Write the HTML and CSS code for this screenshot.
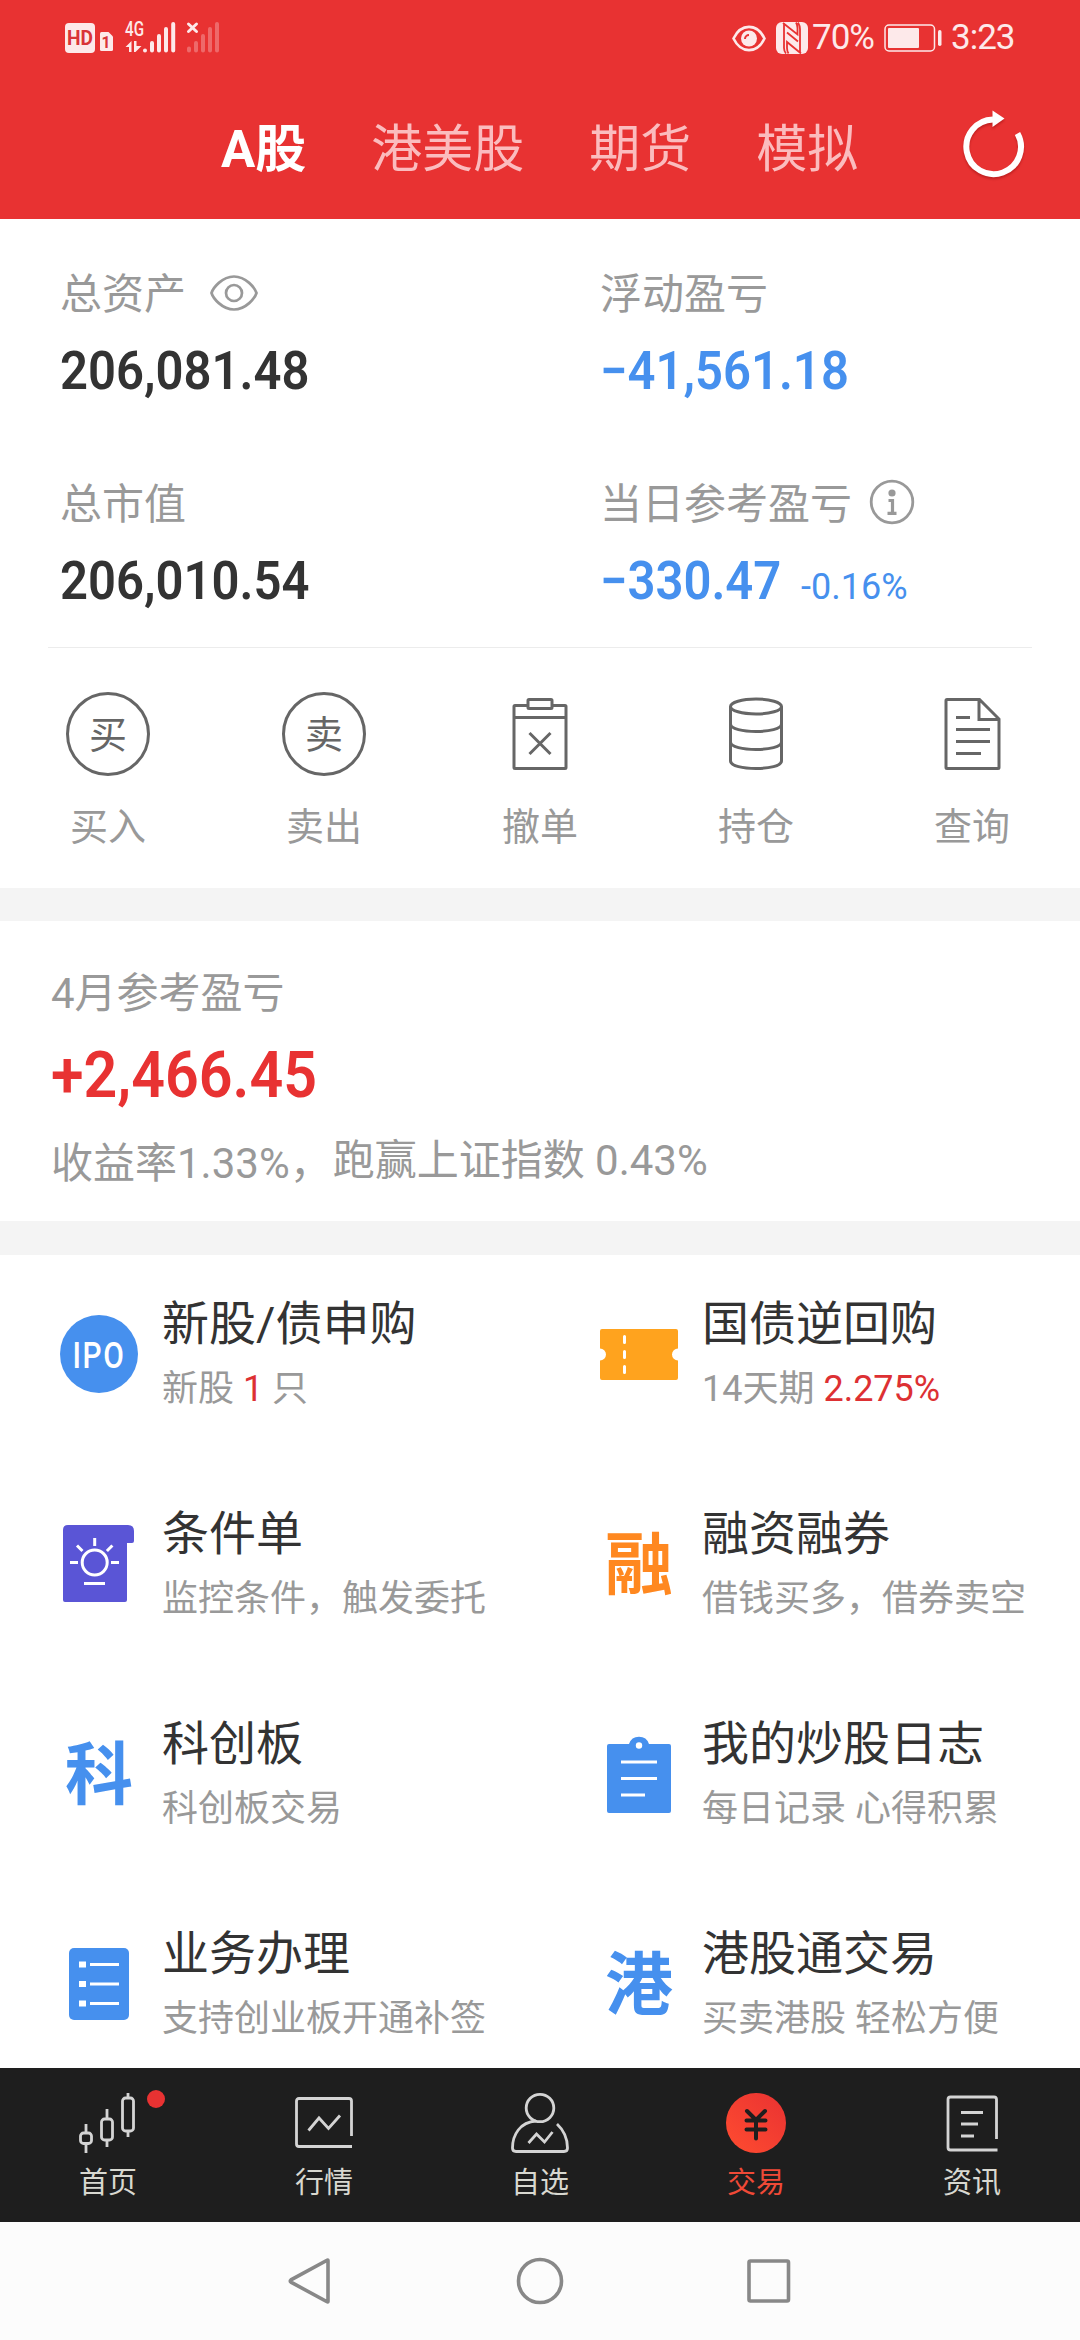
FILE: index.html
```html
<!DOCTYPE html>
<html lang="zh-CN">
<head>
<meta charset="utf-8">
<title>交易</title>
<link rel="stylesheet" href="styles.css">
</head>
<body>
<div class="screen">
  <header class="header">
    <div class="status">
      <svg class="status-left" width="156" height="46" viewBox="64 12 156 46" fill="#fde9ea">
        <rect x="65" y="23" width="30" height="30" rx="4"/>
        <text class="st-hd" x="67" y="45" textLength="26" lengthAdjust="spacingAndGlyphs">HD</text>
        <path d="M101.500 32h7l4.500 4.500v13a1.500 1.500 0 0 1-1.500 1.500h-10a1.500 1.500 0 0 1-1.500-1.500v-16a1.500 1.500 0 0 1 1.500-1.500z"/>
        <text class="st-sim" x="101.500" y="48" textLength="9" lengthAdjust="spacingAndGlyphs">1</text>
        <text class="st-net" x="125" y="36" textLength="19" lengthAdjust="spacingAndGlyphs">4G</text>
        <path d="M125.500 47l6-6v11h-2.500v-5zM134 41h2.500v5h5l-6 6h-1.500z"/>
        <g stroke="#fde9ea" stroke-width="4" stroke-linecap="round">
          <path d="M145 50.500v0M152 43v7.500M159 36v14.500M166 29v21.500M173.200 24v26.500"/>
          <path d="M188.500 24l8 7.500M196.500 24l-8 7.500" stroke-width="3"/>
          <path d="M189 48.500v2M196 43v7.500M203 36v14.500M210 29v21.500M217 24v26.500" opacity=".3"/>
        </g>
      </svg>
      <div class="status-right">
        <svg width="34" height="27" viewBox="0 0 34 27"><path d="M1.500 13.500C9-2 25-2 32.500 13.500 25 29 9 29 1.500 13.500z" fill="none" stroke="#fde9ea" stroke-width="2.600"/><circle cx="17" cy="13.500" r="8" fill="#fde9ea"/><path d="M13 14a4 4 0 0 1 4-4" fill="none" stroke="#e83232" stroke-width="2"/></svg>
        <svg class="nfc" width="32" height="32" viewBox="0 0 32 32"><rect width="32" height="32" rx="6" fill="#fde9ea"/><path d="M8 1v25q0 3 2 5.500M7 1l14.500 11.500V6q0-3-1.500-5.500M24 31V7q0-3-2-6.500M25 31.500L11 20v6q0 3 1.500 5.500M11 10.500l11 9" fill="none" stroke="#e83232" stroke-width="1.800"/></svg>
        <span class="st-text pct">70%</span>
        <svg class="battery" width="58" height="28" viewBox="0 0 58 28"><rect x="1" y="1" width="49.500" height="26" rx="4" fill="none" stroke="#fde9ea" stroke-width="1.500"/><rect x="4" y="4" width="31" height="20" rx="1" fill="#fde9ea"/><rect x="54" y="6" width="3.500" height="16" rx="1.700" fill="#fde9ea"/></svg>
        <span class="st-text clock">3:23</span>
      </div>
    </div>
    <nav class="markets">
      <span class="market active">A股</span>
      <span class="market">港美股</span>
      <span class="market">期货</span>
      <span class="market">模拟</span>
      <svg class="refresh" width="64" height="70" viewBox="0 0 64 70"><path d="M31 10.500A27.300 27.300 0 1 0 55.500 24.500" fill="none" stroke="#fff" stroke-width="6"/><path d="M30.500 1.500l12 8-12 8.500z" fill="#fff"/></svg>
    </nav>
  </header>

  <section class="account">
    <div class="figures">
      <div class="figure">
        <div class="label">总资产<svg class="eye" width="48" height="36" viewBox="0 0 48 36" fill="none" stroke="#999" stroke-width="2.700"><path d="M1.500 18C3 13 12 1.500 24 1.500S45 13 46.500 18C45 23 36 34.500 24 34.500S3 23 1.500 18z"/><circle cx="24" cy="18" r="8"/></svg></div>
        <div class="value"><span class="digits">206,081.48</span></div>
      </div>
      <div class="figure">
        <div class="label">浮动盈亏</div>
        <div class="value down"><span class="digits">−41,561.18</span></div>
      </div>
      <div class="figure">
        <div class="label">总市值</div>
        <div class="value"><span class="digits">206,010.54</span></div>
      </div>
      <div class="figure">
        <div class="label">当日参考盈亏<svg class="info" width="46" height="46" viewBox="0 0 46 46"><circle cx="23" cy="23" r="20.800" fill="none" stroke="#999" stroke-width="2.800"/><circle cx="23" cy="14" r="3.600" fill="#999"/><path d="M19.500 21.500h4v12.500M18.500 34.300h9" fill="none" stroke="#999" stroke-width="3.200"/></svg></div>
        <div class="value down"><span class="digits">−330.47</span><span class="rate">-0.16%</span></div>
      </div>
    </div>
    <div class="divider"></div>
    <div class="actions">
      <div class="action"><span class="ring">买</span><span class="action-name">买入</span></div>
      <div class="action"><span class="ring">卖</span><span class="action-name">卖出</span></div>
      <div class="action"><svg width="84" height="84" viewBox="0 0 84 84" class="line"><path d="M30 13.500h-13q-1 0-1 1v61q0 1 1 1h50q1 0 1-1v-61q0-1-1-1H54M16 25.500h52"/><rect x="30" y="7.500" width="24" height="9" rx="1"/><path d="M31.500 41l21 21M52.500 41l-21 21"/></svg><span class="action-name">撤单</span></div>
      <div class="action"><svg width="84" height="84" viewBox="0 0 84 84" class="line"><ellipse cx="42" cy="14.500" rx="25.500" ry="7.500"/><path d="M16.500 14.500V69c0 10 51 10 51 0V14.500M16.500 32c0 10 51 10 51 0M16.500 50c0 10 51 10 51 0"/></svg><span class="action-name">持仓</span></div>
      <div class="action"><svg width="84" height="84" viewBox="0 0 84 84" class="line"><path d="M49.500 7.500H17q-1 0-1 1v67q0 1 1 1h51q1 0 1-1V27zM49 7.500v20H69M26 25.500h14M26 37.500h34M26 49.500h34M26 61.500h25"/></svg><span class="action-name">查询</span></div>
    </div>
  </section>

  <section class="month">
    <div class="label">4月参考盈亏</div>
    <div class="month-value"><span class="digits">+2,466.45</span></div>
    <div class="month-note"><span>收益率1.33%，</span><span class="beat">跑赢上证指数 0.43%</span></div>
  </section>

  <section class="services">
    <div class="service">
      <svg width="78" height="78" viewBox="0 0 78 78"><circle cx="39" cy="39" r="39" fill="#4690ee"/><text class="ipo" x="12.500" y="52.500" textLength="53" lengthAdjust="spacingAndGlyphs">IPO</text></svg>
      <div><div class="name">新股/债申购</div><div class="desc">新股 <b>1</b> 只</div></div>
    </div>
    <div class="service">
      <svg width="78" height="78" viewBox="0 0 78 78"><path d="M2 14h74q2 0 2 2v17.500a6 6 0 0 0 0 12V63q0 2-2 2H2q-2 0-2-2V45.500a6 6 0 0 0 0-12V16q0-2 2-2z" fill="#ffa31e"/><path d="M24.500 21.500v6M24.500 36.500v6M24.500 51.500v6" stroke="#fff" stroke-width="3" stroke-linecap="round"/></svg>
      <div><div class="name">国债逆回购</div><div class="desc">14天期 <b>2.275%</b></div></div>
    </div>
    <div class="service">
      <svg width="78" height="78" viewBox="0 0 78 78"><path d="M8 0h60q6 0 6 6v10q0 2-2 2h-5v57q0 2-2 2H5q-2 0-2-2V5q0-5 5-5z" fill="#5a55d6"/><g fill="none" stroke="#fff" stroke-width="3"><circle cx="34.700" cy="37.500" r="12.500"/><path d="M34.700 13v8M17 20.500l5.500 5.500M52.400 20.500L46.900 26M10 37.500h8M51 37.500h8M24 58.500h21"/></g></svg>
      <div><div class="name">条件单</div><div class="desc">监控条件，触发委托</div></div>
    </div>
    <div class="service">
      <span class="glyph orange">融</span>
      <div><div class="name">融资融券</div><div class="desc">借钱买多，借券卖空</div></div>
    </div>
    <div class="service">
      <span class="glyph blue">科</span>
      <div><div class="name">科创板</div><div class="desc">科创板交易</div></div>
    </div>
    <div class="service">
      <svg width="78" height="78" viewBox="0 0 78 78"><path d="M9 9h20a10.500 10.500 0 0 1 20 0h20q2 0 2 2v65q0 2-2 2H9q-2 0-2-2V11q0-2 2-2z" fill="#4690ee"/><circle cx="39" cy="10.500" r="3.200" fill="#fff"/><path d="M21 27h36M21 43.500h36M21 60h24" stroke="#fff" stroke-width="3.200"/></svg>
      <div><div class="name">我的炒股日志</div><div class="desc">每日记录 心得积累</div></div>
    </div>
    <div class="service">
      <svg width="78" height="78" viewBox="0 0 78 78"><rect x="9" y="3" width="60" height="72" rx="5" fill="#4690ee"/><path d="M30 19.500h29M30 39h29M30 58.500h29" stroke="#fff" stroke-width="3"/><path d="M19 16.500h7v6h-7zM19 36h7v6h-7zM19 55.500h7v6h-7z" fill="#fff"/></svg>
      <div><div class="name">业务办理</div><div class="desc">支持创业板开通补签</div></div>
    </div>
    <div class="service">
      <span class="glyph blue">港</span>
      <div><div class="name">港股通交易</div><div class="desc">买卖港股 轻松方便</div></div>
    </div>
  </section>

  <nav class="tabbar">
    <div class="tab"><svg width="60" height="60" viewBox="0 0 60 60"><rect x="2.500" y="40" width="11" height="10.500" rx="3"/><path d="M8 31v9M8 50.500V60M29 16v10M29 47v7M50 0v5M50 38v6"/><rect x="23.500" y="26" width="11" height="21" rx="3"/><rect x="44.500" y="5" width="11" height="33" rx="3"/></svg><span>首页</span><i class="dot"></i></div>
    <div class="tab"><svg width="60" height="60" viewBox="0 0 60 60"><path d="M57.500 43V8q0-2.500-2.500-2.500H5Q2.500 5.500 2.500 8v43q0 2.500 2.500 2.500h53M14.500 37.500l10.500-12.500 9.500 10.500 11.500-13"/></svg><span>行情</span></div>
    <div class="tab"><svg width="60" height="60" viewBox="0 0 60 60"><ellipse cx="30" cy="15" rx="13.800" ry="13.700"/><path d="M26 28C10 29 2.500 42 2.500 55q0 3.500 3.500 3.500h48q3.500 0 3.500-3.500c0-10-4-18-10.500-24M18.500 50l8-9 8 8L42.500 39"/></svg><span>自选</span></div>
    <div class="tab on"><svg width="60" height="60" viewBox="0 0 60 60"><defs><linearGradient id="coin" x1="0" y1="1" x2="1" y2="0"><stop offset="0" stop-color="#ff4c30"/><stop offset="1" stop-color="#e93232"/></linearGradient></defs><circle cx="30" cy="30" r="30" fill="url(#coin)" stroke="none"/><path d="M21 18l9 9 9-9M30 27v18.500M20.500 27.500h19M20.500 36.500h19" stroke="#1e1e1e" stroke-width="4" stroke-linecap="round"/></svg><span>交易</span></div>
    <div class="tab"><svg width="60" height="60" viewBox="0 0 60 60"><path d="M54.500 46V6.500q0-2.500-2.500-2.500H8.500Q6 4 6 6.500v48Q6 57 8.500 57h47M19 19.500h22M19 31h17M19 43h13"/></svg><span>资讯</span></div>
  </nav>

  <div class="sysnav">
    <svg width="48" height="48" viewBox="0 0 48 48"><path d="M41 3.500v41q0 1-1 .2L4 25.200q-1.500-1.200 0-2.400L40 3.300q1-.8 1 .2z"/></svg>
    <svg width="48" height="48" viewBox="0 0 48 48"><circle cx="24" cy="24" r="21.500"/></svg>
    <svg width="48" height="48" viewBox="0 0 48 48"><rect x="4" y="4" width="39.500" height="40" rx="1.500"/></svg>
  </div>
</div>
</body>
</html>
```
FILE: styles.css
```css
* { box-sizing: border-box; }
body {
  margin: 0;
  background: #fff;
  color: #333;
  font-family: Roboto, "Noto Sans CJK SC", sans-serif;
}
svg { display: block; flex: none; }
.screen {
  width: 1080px;
  height: 2340px;
  display: flex;
  flex-direction: column;
  overflow: hidden;
}

/* header */
.header { height: 219px; background: #e83232; flex: none; }
.status {
  height: 79px;
  padding: 12px 63px 0 64px;
  display: flex;
  justify-content: space-between;
  align-items: flex-start;
}
.st-hd { font: 700 21px Roboto, sans-serif; fill: #d93438; }
.st-sim { font: 700 17px Roboto, sans-serif; fill: #d93438; }
.st-net { font: 500 20px Roboto, sans-serif; fill: #fde9ea; }
.status-right { display: flex; align-items: center; height: 34px; margin-top: 9px; }
.st-text { color: #fde9ea; font-size: 35px; line-height: 34px; letter-spacing: -1px; white-space: nowrap; }
.nfc { margin-left: 10px; }
.pct { margin-left: 4px; width: 64px; }
.battery { margin-left: 8px; }
.clock { margin-left: 9px; width: 66px; }
.markets {
  display: flex;
  align-items: center;
  height: 142px;
  padding: 0 54px 0 221px;
  gap: 65px;
}
.market { font-size: 51px; line-height: 60px; color: #fbbcbe; white-space: nowrap; }
.market.active { color: #fff; font-weight: 700; }
.refresh { margin-left: auto; margin-top: -13px; filter: drop-shadow(0 2px 1px rgba(120, 0, 0, .35)); }

/* account */
.account { height: 669px; padding-top: 51px; flex: none; }
.figures {
  display: grid;
  grid-template-columns: 540px 540px;
  row-gap: 79px;
}
.figure { padding-left: 60px; }
.label { display: flex; align-items: center; height: 50px; font-size: 42px; line-height: 50px; color: #999; }
.eye { margin-left: 24px; margin-top: -4px; }
.info { margin-left: 17px; margin-top: 13px; margin-bottom: 19px; }
.value {
  margin-top: 21px;
  height: 60px;
  font-size: 53px;
  font-weight: 600;
  line-height: 60px;
  white-space: nowrap;
}
.digits { display: inline-block; transform: scaleX(.925); transform-origin: left center; }
.down { color: #4690ee; }
.rate { margin-left: 5px; font-size: 36px; font-weight: 400; }
.divider { height: 1px; margin: 36px 48px 0; background: #ececec; }
.actions { display: grid; grid-template-columns: repeat(5, 216px); padding-top: 44px; }
.action { display: flex; flex-direction: column; align-items: center; }
.ring {
  width: 84px;
  height: 84px;
  border: 3px solid #666;
  border-radius: 50%;
  color: #666;
  font-size: 38px;
  line-height: 80px;
  text-align: center;
}
.line { fill: none; stroke: #666; stroke-width: 3; }
.action-name { margin-top: 26px; font-size: 38px; line-height: 50px; color: #999; }

/* monthly result */
.month {
  height: 367px;
  padding: 48px 51px 0;
  border-top: 33px solid #f4f4f4;
  border-bottom: 34px solid #f4f4f4;
  flex: none;
}
.month-value {
  margin-top: 21px;
  font-size: 65px;
  font-weight: 600;
  line-height: 70px;
  color: #e83232;
}
.month-value .digits { transform: scaleX(.91); }
.month-note { display: flex; margin-top: 29px; font-size: 42px; line-height: 50px; color: #999; white-space: nowrap; }
.beat { margin: -3px 0 0 1px; }

/* services */
.services {
  height: 813px;
  padding-top: 39px;
  display: grid;
  grid-template-columns: 540px 540px;
  grid-auto-rows: 210px;
  overflow: hidden;
  flex: none;
}
.service { display: flex; gap: 24px; padding-left: 60px; white-space: nowrap; }
.service > svg, .glyph { margin-top: 21px; }
.name { font-size: 47px; line-height: 60px; }
.desc { margin-top: 12px; font-size: 36px; line-height: 46px; color: #999; }
.desc b { color: #dd3033; font-weight: 400; }
.ipo { font: 500 37px Roboto, sans-serif; letter-spacing: 2px; fill: #fff; }
.glyph { flex: none; width: 78px; height: 78px; font-size: 68px; font-weight: 700; line-height: 83px; text-align: center; }
.orange { color: #ff8820; }
.blue { color: #4690ee; }

/* bottom tabs */
.tabbar {
  height: 154px;
  padding-top: 25px;
  display: grid;
  grid-template-columns: repeat(5, 216px);
  background: #1e1e1e;
  color: #d8d8d0;
  flex: none;
}
.tab { position: relative; display: flex; flex-direction: column; align-items: center; gap: 10px; font-size: 29px; line-height: 40px; }
.tab svg { fill: none; stroke: #d4d4d4; stroke-width: 2.800; overflow: visible; }
.tab.on { color: #f04a37; }
.dot { position: absolute; left: 147px; top: -3px; width: 18px; height: 18px; border-radius: 50%; background: #e83232; }

/* system navigation */
.sysnav {
  height: 118px;
  display: flex;
  justify-content: center;
  align-items: center;
  gap: 181px;
  background: #fcfcfc;
}
.sysnav svg { fill: none; stroke: #888; stroke-width: 3.600; }
```
